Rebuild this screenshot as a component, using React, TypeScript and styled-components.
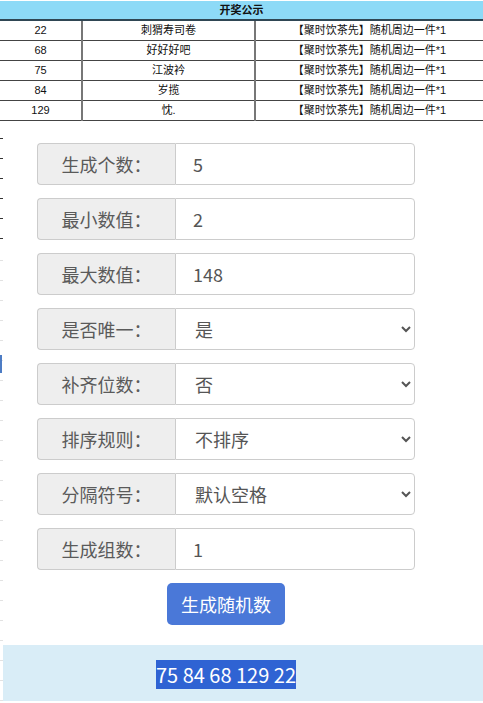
import React, { useState } from "react";
import styled, { createGlobalStyle } from "styled-components";

const GlobalStyle = createGlobalStyle`
  html, body {
    margin: 0;
    padding: 0;
    background: #fff;
  }
  body {
    font-family: "Liberation Sans", "Noto Sans CJK SC", sans-serif;
  }
`;

const CJK = `"Noto Sans CJK SC", "Noto Sans", sans-serif`;

const Page = styled.div`
  width: 483px;
  min-height: 703px;
  overflow: hidden;
`;

const Notice = styled.table`
  width: 100%;
  border-collapse: collapse;
  font-size: 11px;
  color: #111;
  table-layout: fixed;
`;

const HeadCell = styled.th`
  height: 18px;
  padding: 0;
  background: #8ddaf7;
  border-top: 1px solid #fff;
  border-bottom: 2px solid #2f4654;
  font-weight: bold;
  font-size: 11px;
  line-height: 18px;
`;

const Cell = styled.td`
  height: 19px;
  padding: 0;
  text-align: center;
  line-height: 19px;
  border-bottom: 1px solid #444;
  border-left: 2px solid #777;
  &:first-child {
    border-left: none;
  }
`;

const Below = styled.div`
  display: flex;
  flex-direction: row;
`;

const Strip = styled.div`
  width: 3px;
  flex: none;
  background:
    linear-gradient(#4d7cc4, #4d7cc4) 0 234px / 2px 18px no-repeat,
    repeating-linear-gradient(
        to bottom,
        transparent 0 17px,
        #333 17px 18px,
        transparent 18px 20px
      )
      0 0 / 3px 120px no-repeat,
    repeating-linear-gradient(
        to bottom,
        transparent 0 19px,
        #e2e2e2 19px 20px
      )
      0 120px / 3px 100% no-repeat;
`;

const Panel = styled.div`
  flex: 1;
  background: #fff;
  padding-top: 22px;
  font-family: ${CJK};
`;

const Form = styled.div`
  width: 378px;
  margin-left: 34px;
  display: flex;
  flex-direction: column;
  gap: 13px;
`;

const Row = styled.div`
  display: flex;
  flex-direction: row;
  height: 42px;
`;

const Label = styled.span`
  width: 138px;
  flex: none;
  box-sizing: border-box;
  display: flex;
  align-items: center;
  justify-content: center;
  background: #eee;
  border: 1px solid #ccc;
  border-right: none;
  border-radius: 4px 0 0 4px;
  color: #5a5a5a;
  font-size: 18px;
`;

const fieldStyle = `
  flex: 1;
  min-width: 0;
  box-sizing: border-box;
  height: 42px;
  margin: 0;
  border: 1px solid #ccc;
  border-radius: 0 4px 4px 0;
  background: #fff;
  color: #555;
  font-family: ${CJK};
  font-size: 18px;
  outline: none;
`;

const Input = styled.input`
  ${fieldStyle}
  padding: 0 17px;
`;

const Select = styled.select`
  ${fieldStyle}
  padding: 0 8px 0 15px;
`;

const Actions = styled.div`
  display: flex;
  justify-content: center;
`;

const Button = styled.button`
  height: 42px;
  padding: 0 14px;
  border: none;
  border-radius: 5px;
  background: #4a78d8;
  color: #fff;
  font-family: ${CJK};
  font-size: 18px;
  cursor: pointer;
`;

const Result = styled.div`
  margin-top: 20px;
  background: #d9edf7;
  padding: 16px 0 12px;
`;

const ResultInner = styled.div`
  width: 378px;
  margin-left: 34px;
  text-align: center;
  font-size: 20px;
  line-height: 28px;
`;

const Picked = styled.span`
  background: #2f63d3;
  color: #fff;
`;

const winners = [
  { no: 22, name: "刺猬寿司卷" },
  { no: 68, name: "好好好吧" },
  { no: 75, name: "江波衿" },
  { no: 84, name: "岁揽" },
  { no: 129, name: "忱." },
];

const prize = "【聚时饮茶先】随机周边一件*1";

type Field =
  | { label: string; kind: "input"; value: string }
  | { label: string; kind: "select"; value: string; options: string[] };

const fields: Field[] = [
  { label: "生成个数：", kind: "input", value: "5" },
  { label: "最小数值：", kind: "input", value: "2" },
  { label: "最大数值：", kind: "input", value: "148" },
  { label: "是否唯一：", kind: "select", value: "是", options: ["是", "否"] },
  { label: "补齐位数：", kind: "select", value: "否", options: ["否", "是"] },
  {
    label: "排序规则：",
    kind: "select",
    value: "不排序",
    options: ["不排序", "从小到大", "从大到小"],
  },
  {
    label: "分隔符号：",
    kind: "select",
    value: "默认空格",
    options: ["默认空格", "逗号", "换行"],
  },
  { label: "生成组数：", kind: "input", value: "1" },
];

function App() {
  const [values, setValues] = useState<string[]>(fields.map((f) => f.value));
  const [result] = useState("75 84 68 129 22");

  const update = (i: number, v: string) =>
    setValues(values.map((old, j) => (j === i ? v : old)));

  return (
    <Page>
      <GlobalStyle />
      <Notice>
        <colgroup>
          <col style={{ width: 82 }} />
          <col style={{ width: 173 }} />
          <col />
        </colgroup>
        <thead>
          <tr>
            <HeadCell colSpan={3}>开奖公示</HeadCell>
          </tr>
        </thead>
        <tbody>
          {winners.map((w) => (
            <tr key={w.no}>
              <Cell>{w.no}</Cell>
              <Cell>{w.name}</Cell>
              <Cell>{prize}</Cell>
            </tr>
          ))}
        </tbody>
      </Notice>
      <Below>
        <Strip />
        <Panel>
          <Form>
            {fields.map((f, i) => (
              <Row key={f.label}>
                <Label>{f.label}</Label>
                {f.kind === "input" ? (
                  <Input
                    value={values[i]}
                    onChange={(e) => update(i, e.target.value)}
                  />
                ) : (
                  <Select
                    value={values[i]}
                    onChange={(e) => update(i, e.target.value)}
                  >
                    {f.options.map((o) => (
                      <option key={o}>{o}</option>
                    ))}
                  </Select>
                )}
              </Row>
            ))}
            <Actions>
              <Button>生成随机数</Button>
            </Actions>
          </Form>
          <Result>
            <ResultInner>
              <Picked>{result}</Picked>
            </ResultInner>
          </Result>
        </Panel>
      </Below>
    </Page>
  );
}

export default App;
